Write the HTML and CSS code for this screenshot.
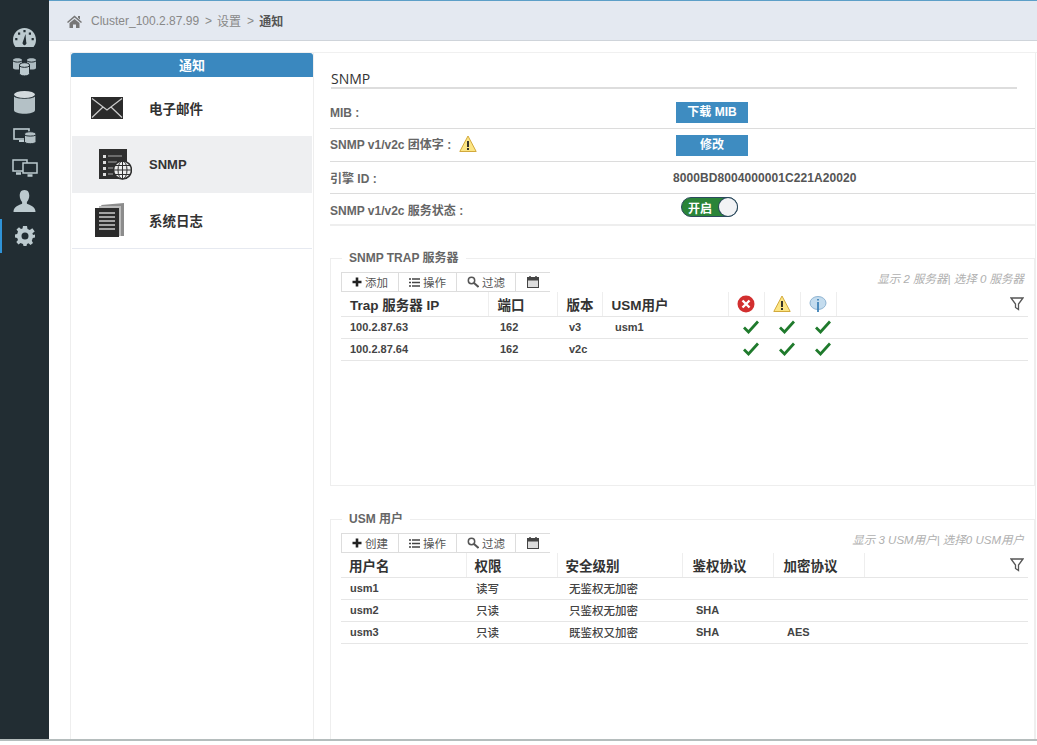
FILE: index.html
```html
<!DOCTYPE html>
<html lang="zh-CN">
<head>
    <meta charset="UTF-8">
    <title>通知</title>
    <link rel="stylesheet" href="styles.css">
</head>
<body>
<svg class="defs" width="0" height="0">
    <symbol id="check" viewBox="0 0 16 14"><path d="M1 7.500 L5.500 12 L15 1.500" fill="none" stroke="#1f7a2c" stroke-width="2.800"/></symbol>
    <symbol id="plus" viewBox="0 0 10 10"><path d="M5 0.500 V9.500 M0.500 5 H9.500" stroke="#222" stroke-width="2.600"/></symbol>
    <symbol id="list" viewBox="0 0 11 9"><path d="M0 1 H2 M3 1 H11 M0 4.500 H2 M3 4.500 H11 M0 8 H2 M3 8 H11" stroke="#444" stroke-width="1.400"/></symbol>
    <symbol id="search" viewBox="0 0 12 12"><circle cx="4.500" cy="4.500" r="3.200" fill="none" stroke="#555" stroke-width="1.500"/><path d="M7 7 L11.500 11" stroke="#555" stroke-width="2"/></symbol>
    <symbol id="calendar" viewBox="0 0 12 12"><rect x="0.500" y="1.500" width="11" height="10" fill="#ddd" stroke="#444"/><rect x="0.500" y="1.500" width="11" height="3" fill="#444"/><path d="M3 0 V2 M9 0 V2" stroke="#444" stroke-width="1.500"/></symbol>
    <symbol id="filter" viewBox="0 0 14 14"><path d="M1 1 H13 L8.500 7 V12.500 L5.500 10.500 V7 Z" fill="#fff" stroke="#555" stroke-width="1.300"/></symbol>
    <symbol id="warn" viewBox="0 0 18 18"><path d="M9 1 L17.200 16.500 H0.800 Z" fill="#fce584" stroke="#d2a93c" stroke-linejoin="round"/><path d="M9 6 V12 M9 13 V15" stroke="#222" stroke-width="1.800"/></symbol>
</svg>

<div class="app">
    <nav class="sidebar">
        <a class="side-item">
            <svg width="23" height="19" viewBox="0 0 23 19"><path fill-rule="evenodd" d="M11.500 0 C5 0 0 5 0 12 C0 15 1 17 2.500 19 H20.500 C22 17 23 15 23 12 C23 5 18 0 11.500 0 Z M12.500 6 L13.200 14 A2 2 0 1 1 9.800 14 Z M5 4.500 h2.200 v2.200 h-2.200 Z M15.800 4.500 h2.200 v2.200 h-2.200 Z M10.400 2 h2.200 v2.200 h-2.200 Z M2.200 10 h2.200 v2.200 h-2.200 Z M18.600 10 h2.200 v2.200 h-2.200 Z" fill="#bccacf"/></svg>
        </a>
        <a class="side-item">
            <svg width="23" height="18" viewBox="0 0 23 18">
                <path d="M0 2 C0 -0.500 9 -0.500 9 2 V10 C9 12 0 12 0 10 Z M14 2 C14 -0.500 23 -0.500 23 2 V10 C23 12 14 12 14 10 Z" fill="#aebcc2"/>
                <path d="M0 3 C2 4.500 7 4.500 9 3 M14 3 C16 4.500 21 4.500 23 3" fill="none" stroke="#222d33"/>
                <path d="M6.500 7 C6.500 4 16.500 4 16.500 7 V15.500 C16.500 18.700 6.500 18.700 6.500 15.500 Z" fill="#bccacf" stroke="#222d33"/>
                <path d="M6.500 8 C8.500 9.800 14.500 9.800 16.500 8" fill="none" stroke="#222d33"/>
            </svg>
        </a>
        <a class="side-item">
            <svg width="21" height="23" viewBox="0 0 21 23"><ellipse cx="10.500" cy="3.500" rx="10.500" ry="3.500" fill="#d3dadd"/><path d="M0 5.500 C2 8.500 19 8.500 21 5.500 V19 C21 24 0 24 0 19 Z" fill="#b4c1c6"/></svg>
        </a>
        <a class="side-item">
            <svg width="23" height="16" viewBox="0 0 23 16">
                <rect x="1" y="1" width="15" height="10" fill="none" stroke="#bccacf" stroke-width="1.600"/>
                <path d="M6 12 h5 v2 h-5 Z" fill="#bccacf"/>
                <path d="M11.500 6 C11.500 3 23 3 23 6 V13.500 C23 16.500 11.500 16.500 11.500 13.500 Z" fill="#b4c1c6" stroke="#222d33"/>
                <path d="M11.500 7 C13.500 8.500 21 8.500 23 7" fill="none" stroke="#222d33"/>
            </svg>
        </a>
        <a class="side-item">
            <svg width="26" height="18" viewBox="0 0 26 18" fill="none" stroke="#bccacf" stroke-width="1.500"><rect x="1" y="1" width="14" height="11"/><rect x="11" y="4" width="14" height="10" fill="#222d33"/><path d="M4 14.500 h5 M15.500 16.500 h5" stroke-width="2.500"/></svg>
        </a>
        <a class="side-item">
            <svg width="23" height="22" viewBox="0 0 23 23"><path d="M11.500 0 C15.500 0 16.500 3 16.500 6 C16.500 9 15 11.500 14 12.500 V14.500 C17 16 23 17 23 23 H0 C0 17 6 16 9 14.500 V12.500 C8 11.500 6.500 9 6.500 6 C6.500 3 7.500 0 11.500 0 Z" fill="#bccacf"/></svg>
        </a>
        <a class="side-item side-active">
            <svg width="20" height="20" viewBox="0 0 20 20"><path fill-rule="evenodd" d="M8 0 H12 L12.500 3 L14.800 4 L17.300 2.300 L17.700 2.700 L19.700 5.500 L17.400 7.300 L18 9 L20 8.500 V11.500 L17.800 12 L16.800 14.800 L18 17 L15.500 19 L13.500 17.300 L12 18 L11.500 20 H8.500 L8 18 L5.500 17 L3.500 18.500 L1.300 16 L3 14 L2.200 12 L0 11.500 V8.500 L2.200 8 L3 5.500 L1.500 3.500 L4 1.300 L6 3 L7.500 2.500 Z M10 6.500 A3.500 3.500 0 1 0 10 13.500 A3.500 3.500 0 1 0 10 6.500 Z" fill="#bccacf"/></svg>
        </a>
    </nav>

    <div class="content">
        <header class="crumbs">
            <svg class="home-icon" width="15" height="13" viewBox="0 0 15 13"><path d="M7.500 0.500 L15 7 L14 8 L7.500 2.500 L1 8 L0 7 Z M2.500 8 L7.500 4 L12.500 8 V13 H9 V9.500 H6 V13 H2.500 Z M11 1 h2 v3.500 l-2 -1.700 Z" fill="#777"/></svg>
            <span>Cluster_100.2.87.99</span><span class="sep">&gt;</span><span>设置</span><span class="sep">&gt;</span><b>通知</b>
        </header>

        <div class="page">
            <aside class="panel-nav">
                <h3 class="panel-title">通知</h3>
                <a class="nav-row nav-mail">
                    <span class="nav-icon">
                        <svg width="32" height="22" viewBox="0 0 32 22"><rect width="32" height="22" fill="#2b2b2b"/><path d="M1 1.500 L16 13 L31 1.500 M1 20.500 L12 10 M31 20.500 L20 10" fill="none" stroke="#ccc" stroke-width="1.200"/></svg>
                    </span>
                    电子邮件
                </a>
                <a class="nav-row nav-snmp nav-current">
                    <span class="nav-icon">
                        <svg width="33" height="31" viewBox="0 0 33 31"><rect width="28" height="30" fill="#2f2f2f"/><path d="M4 6 h3 v3 h-3 Z M4 12 h3 v3 h-3 Z M4 18 h3 v3 h-3 Z M4 24 h3 v3 h-3 Z" fill="#ddd"/><path d="M9 7 H23 M9 13 H18 M9 19 H14 M9 25 H14" stroke="#aaa" stroke-width="1.200"/><circle cx="23.500" cy="21" r="9" fill="#eee" stroke="#2f2f2f" stroke-width="1.500"/><path d="M23.500 12 V30 M14.500 21 H32.500 M16 16.500 H31 M16 25.500 H31" stroke="#2f2f2f"/><ellipse cx="23.500" cy="21" rx="4.500" ry="9" fill="none" stroke="#2f2f2f"/></svg>
                    </span>
                    SNMP
                </a>
                <a class="nav-row nav-log">
                    <span class="nav-icon">
                        <svg width="30" height="34" viewBox="0 0 30 34"><path d="M6 2 L29 0 V33 H26 Z" fill="#8c8c8c"/><path d="M4 3 H26 V33 H4 Z" fill="#bbb"/><path d="M0 5 H24 V34 H0 Z" fill="#2b2b2b"/><path d="M4 10 H20 M4 14 H20 M4 18 H20 M4 22 H20 M4 26 H20" stroke="#ccc" stroke-width="1.500"/></svg>
                    </span>
                    系统日志
                </a>
            </aside>

            <main class="panel-main">
                <h2 class="main-title">SNMP</h2>

                <div class="info-row">
                    <label class="info-label">MIB :</label>
                    <a class="btn-blue">下载 MIB</a>
                </div>
                <div class="info-row info-tall">
                    <label class="info-label">SNMP v1/v2c 团体字 : <svg class="warn-icon" width="18" height="18"><use href="#warn"/></svg></label>
                    <a class="btn-blue">修改</a>
                </div>
                <div class="info-row">
                    <label class="info-label">引擎 ID :</label>
                    <span class="engine-id">8000BD8004000001C221A20020</span>
                </div>
                <div class="info-row info-last">
                    <label class="info-label">SNMP v1/v2c 服务状态 :</label>
                    <span class="switch"><span class="switch-text">开启</span><span class="switch-knob"></span></span>
                </div>

                <fieldset class="group group-trap">
                    <legend>SNMP TRAP 服务器</legend>
                    <div class="toolbar-line">
                        <ul class="toolbar">
                            <li class="tb-a"><svg width="10" height="10"><use href="#plus"/></svg>添加</li>
                            <li class="tb-b"><svg width="11" height="9"><use href="#list"/></svg>操作</li>
                            <li class="tb-c"><svg width="12" height="12"><use href="#search"/></svg>过滤</li>
                            <li class="tb-d"><svg width="12" height="12"><use href="#calendar"/></svg></li>
                        </ul>
                        <span class="count">显示 2 服务器| 选择 0 服务器</span>
                    </div>
                    <table class="grid">
                        <colgroup><col class="w147"><col class="w69"><col class="w45"><col class="w126"><col class="w36"><col class="w36"><col class="w36"><col></colgroup>
                        <thead>
                            <tr>
                                <th>Trap 服务器 IP</th><th>端口</th><th>版本</th><th>USM用户</th>
                                <th class="ic">
                                    <svg width="18" height="18" viewBox="0 0 18 18"><circle cx="9" cy="9" r="8.500" fill="#d22f2f"/><path d="M5.500 5.500 L12.500 12.500 M12.500 5.500 L5.500 12.500" stroke="#fff" stroke-width="2.400"/></svg>
                                </th>
                                <th class="ic"><svg width="18" height="18"><use href="#warn"/></svg></th>
                                <th class="ic">
                                    <svg width="18" height="18" viewBox="0 0 18 18"><ellipse cx="9" cy="8" rx="8" ry="6.500" fill="#c4dcee" stroke="#8fb4d2"/><path d="M9 4 V5.500 M9 7 V17" stroke="#3f83b8" stroke-width="1.800"/></svg>
                                </th>
                                <th class="filter-cell"><svg width="14" height="14"><use href="#filter"/></svg></th>
                            </tr>
                        </thead>
                        <tbody>
                            <tr>
                                <td>100.2.87.63</td><td class="in3">162</td><td class="in3">v3</td><td class="in4">usm1</td>
                                <td class="ok"><svg width="16" height="14"><use href="#check"/></svg></td>
                                <td class="ok"><svg width="16" height="14"><use href="#check"/></svg></td>
                                <td class="ok"><svg width="16" height="14"><use href="#check"/></svg></td><td></td>
                            </tr>
                            <tr>
                                <td>100.2.87.64</td><td class="in3">162</td><td class="in3">v2c</td><td class="in4"></td>
                                <td class="ok"><svg width="16" height="14"><use href="#check"/></svg></td>
                                <td class="ok"><svg width="16" height="14"><use href="#check"/></svg></td>
                                <td class="ok"><svg width="16" height="14"><use href="#check"/></svg></td><td></td>
                            </tr>
                        </tbody>
                    </table>
                </fieldset>

                <fieldset class="group group-usm">
                    <legend>USM 用户</legend>
                    <div class="toolbar-line">
                        <ul class="toolbar">
                            <li class="tb-a"><svg width="10" height="10"><use href="#plus"/></svg>创建</li>
                            <li class="tb-b"><svg width="11" height="9"><use href="#list"/></svg>操作</li>
                            <li class="tb-c"><svg width="12" height="12"><use href="#search"/></svg>过滤</li>
                            <li class="tb-d"><svg width="12" height="12"><use href="#calendar"/></svg></li>
                        </ul>
                        <span class="count">显示 3 USM用户| 选择0 USM用户</span>
                    </div>
                    <table class="grid grid-usm">
                        <colgroup><col class="w125"><col class="w91"><col class="w125"><col class="w91"><col class="w91"><col></colgroup>
                        <thead>
                            <tr><th>用户名</th><th>权限</th><th>安全级别</th><th class="th-proto">鉴权协议</th><th class="th-proto">加密协议</th><th class="filter-cell"><svg width="14" height="14"><use href="#filter"/></svg></th></tr>
                        </thead>
                        <tbody>
                            <tr><td>usm1</td><td>读写</td><td class="in3">无鉴权无加密</td><td class="in4"></td><td class="in4"></td><td></td></tr>
                            <tr><td>usm2</td><td>只读</td><td class="in3">只鉴权无加密</td><td class="in4">SHA</td><td class="in4"></td><td></td></tr>
                            <tr><td>usm3</td><td>只读</td><td class="in3">既鉴权又加密</td><td class="in4">SHA</td><td class="in4">AES</td><td></td></tr>
                        </tbody>
                    </table>
                </fieldset>
            </main>
        </div>
    </div>
</div>
</body>
</html>
```

FILE: styles.css
```css
html, body {
    margin: 0;
    height: 745px;
    overflow: hidden;
    background: #fff;
    font-family: "Liberation Sans", "Noto Sans CJK SC", sans-serif;
    color: #444;
}
.defs {
    display: block;
    height: 0;
}
.app {
    display: flex;
    height: 739px;
    border-bottom: 2px solid #b5bdbd;
}

/* left icon bar */
.sidebar {
    width: 49px;
    flex: none;
    box-sizing: border-box;
    padding-top: 22px;
    background: #222d33;
    display: grid;
    grid-template-rows: 30px 30px 40px 28px 36px 30px 40px;
    align-content: start;
}
.side-item {
    display: flex;
    align-items: center;
    justify-content: center;
}
.side-active {
    height: 34px;
    align-self: center;
    border-left: 2px solid #2f93d8;
    padding-right: 2px;
}

.content {
    flex: 1;
    min-width: 0;
    overflow: hidden;
}
.crumbs {
    box-sizing: border-box;
    border-top: 1px solid #5c9fc8;
    border-bottom: 1px solid #cfd4da;
    height: 41px;
    background: #e4e9f1;
    padding: 0 0 0 18px;
    display: flex;
    align-items: center;
    font-size: 12px;
    color: #888;
}
.home-icon {
    margin: 2px 9px 0 0;
}
.crumbs .sep {
    margin: 0 5px 0 6px;
}
.crumbs b {
    color: #555;
}

.page {
    display: flex;
    margin: 11px 0 0 21px;
    border-top: 1px solid #f0f0f0;
    height: 690px;
}

/* left list */
.panel-nav {
    width: 244px;
    flex: none;
    box-sizing: border-box;
    border-left: 1px solid #eee;
    border-right: 1px solid #eee;
}
.panel-title {
    margin: 0;
    height: 24px;
    line-height: 25px;
    background: #3a88bf;
    border-radius: 3px 3px 0 0;
    color: #fff;
    font-size: 13px;
    text-align: center;
}
.nav-row {
    display: flex;
    align-items: center;
    box-sizing: border-box;
    margin: 0 1px;
    font-size: 13.5px;
    font-weight: bold;
    color: #333;
}
.nav-mail {
    height: 59px;
    padding-top: 3px;
}
.nav-snmp {
    height: 57px;
    font-size: 13px;
}
.nav-log {
    height: 56px;
    padding-bottom: 2px;
    border-bottom: 1px solid #e6e9f0;
}
.nav-current {
    background: #eeeff1;
}
.nav-icon {
    width: 77px;
    flex: none;
    box-sizing: border-box;
    display: flex;
    justify-content: center;
}
.nav-mail .nav-icon {
    padding-right: 8px;
}
.nav-snmp .nav-icon {
    padding-left: 9px;
}
.nav-log .nav-icon {
    padding-right: 2px;
}

/* right side */
.panel-main {
    flex: 1;
    min-width: 0;
    box-sizing: border-box;
    padding-left: 16px;
    border-right: 1px solid #eee;
    margin-right: 1px;
}
.main-title {
    margin: 17px 18px 0 1px;
    height: 17px;
    line-height: 17px;
    border-bottom: 2px solid #ddd;
    font-family: "Open Sans", "Noto Sans CJK SC", sans-serif;
    font-size: 14px;
    font-weight: normal;
    color: #333;
}
.info-row {
    display: flex;
    align-items: center;
    box-sizing: border-box;
    height: 32px;
    border-bottom: 1px solid #dcdcdc;
}
.info-row:first-of-type {
    margin-top: 8px;
}
.info-tall {
    height: 33px;
}
.info-tall .info-label {
    margin-bottom: 3px;
}
.info-last {
    border-bottom: 2px solid #eee;
}
.info-label {
    width: 346px;
    flex: none;
    display: flex;
    align-items: center;
    font-size: 12px;
    font-weight: bold;
    color: #666;
    white-space: pre;
}
.warn-icon {
    margin-left: 4px;
}
.btn-blue {
    width: 72px;
    height: 21px;
    line-height: 21px;
    background: #3e8cc1;
    color: #fff;
    font-size: 12px;
    font-weight: bold;
    text-align: center;
}
.engine-id {
    margin-left: -3px;
    font-size: 12px;
    font-weight: bold;
    letter-spacing: 0.08px;
    color: #555;
}
.switch {
    margin: 0 0 4px 5px;
    width: 57px;
    height: 20px;
    box-sizing: border-box;
    border-radius: 10px;
    background: #2a8438;
    border: 1px solid #2c4a5e;
    display: flex;
    align-items: center;
    justify-content: space-between;
}
.switch-text {
    padding-left: 6px;
    color: #fff;
    font-size: 12px;
    font-weight: bold;
}
.switch-knob {
    width: 18px;
    height: 18px;
    border-radius: 50%;
    background: #f2f3f5;
    box-shadow: 0 0 0 1px #2c4a5e;
}

/* trap and usm boxes */
.group {
    margin: 25px 0 0 0;
    padding: 7px 6px 0 10px;
    border: 1px solid #eee;
    box-sizing: border-box;
    min-width: 0;
}
.group legend {
    margin-left: 1px;
    padding: 0 7px;
    font-size: 12px;
    font-weight: bold;
    line-height: 14px;
    color: #666;
}
.group-trap {
    height: 235px;
}
.group-usm {
    margin-top: 26px;
    height: 260px;
}
.toolbar-line {
    display: flex;
    justify-content: space-between;
    align-items: flex-start;
    padding-right: 4px;
}
.toolbar {
    display: flex;
    margin: 0;
    padding: 0;
    list-style: none;
    height: 20px;
    box-sizing: border-box;
    border: 1px solid #ddd;
    border-right: none;
}
.toolbar li {
    display: flex;
    align-items: center;
    justify-content: center;
    gap: 3px;
    box-sizing: border-box;
    border-right: 1px solid #ddd;
    font-size: 11.5px;
    color: #555;
}
.toolbar .tb-a {
    width: 57px;
}
.toolbar .tb-b {
    width: 58px;
}
.toolbar .tb-c {
    width: 59px;
}
.toolbar .tb-d {
    width: 34px;
    border-right: none;
}
.count {
    margin-top: -2px;
    font-size: 11.5px;
    font-style: italic;
    color: #b0b0b0;
}

.grid {
    width: 687px;
    border-collapse: collapse;
    table-layout: fixed;
}
.w147 { width: 147px; }
.w125 { width: 125px; }
.w126 { width: 126px; }
.w91 { width: 91px; }
.w69 { width: 69px; }
.w45 { width: 45px; }
.w36 { width: 36px; }
.grid th {
    height: 24px;
    padding: 0 0 0 9px;
    box-sizing: border-box;
    border-right: 1px solid #eee;
    border-bottom: 1px solid #e6e6e6;
    font-size: 13.5px;
    text-align: left;
    color: #333;
    white-space: nowrap;
}
.grid td {
    height: 22px;
    padding: 0 0 0 9px;
    box-sizing: border-box;
    border-bottom: 1px solid #e6e6e6;
    font-size: 11px;
    font-weight: bold;
    color: #444;
    white-space: nowrap;
}
.grid .ic {
    padding: 0;
    text-align: center;
    line-height: 0;
}
.grid .filter-cell {
    padding: 0 4px 0 0;
    border-right: none;
    text-align: right;
    line-height: 0;
}
.grid .in3 {
    padding-left: 12px;
}
.grid .in4 {
    padding-left: 13px;
}
.grid .ok {
    padding: 0 0 0 10px;
    text-align: center;
    line-height: 0;
}
.grid-usm th {
    padding-left: 8px;
}
.grid-usm .th-proto {
    padding-left: 10px;
}
.grid-usm td {
    font-size: 11.5px;
    font-weight: 500;
}
.grid-usm td:nth-child(2) {
    padding-left: 10px;
}
.grid-usm td:first-child,
.grid-usm td.in4 {
    font-size: 11px;
    font-weight: bold;
}
.grid-usm td.in4 {
    padding-left: 14px;
}
```
